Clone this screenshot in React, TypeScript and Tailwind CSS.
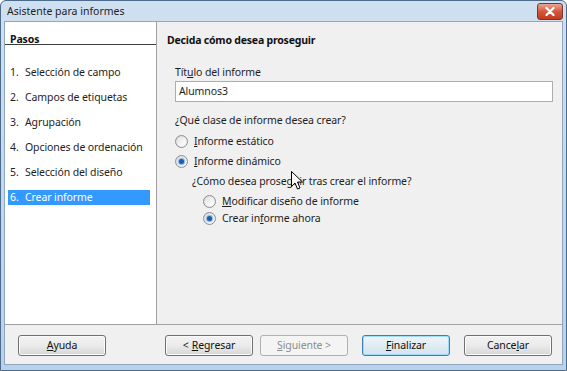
import React from "react";

const font = { fontFamily: '"Noto Sans", "Open Sans", sans-serif' };

const steps = [
  "Selección de campo",
  "Campos de etiquetas",
  "Agrupación",
  "Opciones de ordenación",
  "Selección del diseño",
  "Crear informe",
];

const Radio = ({ checked }: { checked?: boolean }) => (
  <span className="relative inline-flex h-[13px] w-[13px] shrink-0 items-center justify-center rounded-full border border-[#8e8f8f] bg-gradient-to-br from-[#d6d6d6] to-[#fafafa]">
    <span className="h-[9px] w-[9px] rounded-full bg-gradient-to-br from-[#e4e4e4] to-[#ffffff]" />
    {checked && (
      <span className="absolute h-[5px] w-[5px] rounded-full bg-[#1b5db0] shadow-[0_0_1px_1px_#7fb0e6]" />
    )}
  </span>
);

const Btn = ({
  children,
  variant,
}: {
  children: React.ReactNode;
  variant?: "default" | "disabled";
}) => {
  const base =
    "flex h-[21px] w-[88px] items-center justify-center rounded-[3px] text-[10.5px] leading-none";
  if (variant === "disabled")
    return (
      <div className={`${base} border border-[#adb2b5] bg-[#f4f4f4] text-[#8d8d8d]`}>
        {children}
      </div>
    );
  if (variant === "default")
    return (
      <div
        className={`${base} border border-[#3c7fb1] bg-gradient-to-b from-[#eef5fa] to-[#d3e3ee] text-[#111] shadow-[inset_0_0_0_1px_#9fdcf9]`}
      >
        {children}
      </div>
    );
  return (
    <div
      className={`${base} border border-[#707070] bg-gradient-to-b from-[#f2f2f2] via-[#ebebeb] to-[#d6d6d6] text-[#111] shadow-[inset_0_0_0_1px_#fbfbfb]`}
    >
      {children}
    </div>
  );
};

export default function App() {
  return (
    <div
      className="flex h-[371px] w-[567px] flex-col rounded-t-[6px] border border-[#4d6b8a] bg-gradient-to-b from-[#cfe0f1] to-[#b9d1ea]"
      style={font}
    >
      {/* title bar */}
      <div className="flex h-[20px] items-center justify-between pl-[6px] pr-[3px]">
        <span className="text-[10.5px] leading-[15px] text-[#1e1e1e]">Asistente para informes</span>
        <div className="mt-[1px] flex h-[17px] w-[26px] items-center justify-center rounded-[3px] border border-[#6e3a33] bg-gradient-to-b from-[#e8a493] via-[#d5563c] to-[#c4391f]">
          <svg width="10" height="9" viewBox="0 0 10 9">
            <path
              d="M1.5 1 L8.5 8 M8.5 1 L1.5 8"
              stroke="#fff"
              strokeWidth="2.2"
              strokeLinecap="round"
            />
          </svg>
        </div>
      </div>

      {/* body */}
      <div className="mx-[3px] mb-[5px] flex flex-1 flex-col border border-[#8ea6c0] bg-[#f0f0f0] text-[10.5px] leading-[15px] tracking-[-0.1px]">
        <div className="flex h-[303px] border-b border-[#a0a0a0]">
          {/* left steps */}
          <div className="w-[152px] border-r border-[#a0a0a0] bg-white pt-[11px]">
            <div className="h-[12px] border-b border-[#3c3c3c] pl-[5px] leading-[12px]">
              <span className="font-bold text-[#111]">Pasos</span>
            </div>
            <div className="mt-[20px] flex flex-col gap-[10px] pl-[3px] pr-[6px]">
              {steps.map((s, i) => (
                <div
                  key={s}
                  className={`flex h-[15px] items-center whitespace-nowrap pl-[2px] ${
                    i === 5 ? "bg-[#3399ff] text-white" : "text-[#1e1e1e]"
                  }`}
                >
                  <span className="w-[15px] shrink-0">{i + 1}.</span>
                  <span>{s}</span>
                </div>
              ))}
            </div>
          </div>

          {/* right content */}
          <div className="relative flex-1 pl-[10px] pr-[9px] pt-[11px] text-[#1e1e1e]">
            <div className="font-bold tracking-[-0.2px] text-[#111]">
              Decida cómo desea proseguir
            </div>
            <div className="mt-[17px] pl-[8px]">
              <div>
                Tít<span className="underline">u</span>lo del informe
              </div>
              <div className="mt-[1px] flex h-[21px] items-center border border-[#abadb3] bg-white pl-[3px]">
                Alumnos3
              </div>
              <div className="mt-[11px]">¿Qué clase de informe desea crear?</div>
              <div className="mt-[6px] flex h-[15px] items-center gap-[6px]">
                <Radio />
                <span>
                  <span className="underline">I</span>nforme estático
                </span>
              </div>
              <div className="mt-[5px] flex h-[15px] items-center gap-[6px]">
                <Radio checked />
                <span>
                  <span className="underline">I</span>nforme dinámico
                </span>
              </div>
              <div className="mt-[5px] pl-[17px]">
                ¿Cómo desea proseguir tras crear el informe?
              </div>
              <div className="mt-[5px] flex h-[15px] items-center gap-[6px] pl-[28px]">
                <Radio />
                <span>
                  <span className="underline">M</span>odificar diseño de informe
                </span>
              </div>
              <div className="mt-[2px] flex h-[15px] items-center gap-[6px] pl-[28px]">
                <Radio checked />
                <span>
                  Crear in<span className="underline">f</span>orme ahora
                </span>
              </div>
            </div>
            {/* mouse cursor */}
            <svg
              className="absolute left-[134px] top-[149px]"
              width="12"
              height="19"
              viewBox="0 0 12 19"
            >
              <path
                d="M0.5 0.5 L0.5 15.5 L4 12 L6.5 18 L9 17 L6.5 11 L11.5 11 Z"
                fill="#fff"
                stroke="#000"
                strokeWidth="1"
                strokeLinejoin="round"
              />
            </svg>
          </div>
        </div>

        {/* buttons */}
        <div className="flex flex-1 items-start pl-[13px] pt-[10px]">
          <Btn>
            <span className="underline">A</span>yuda
          </Btn>
          <div className="ml-[59px]">
            <Btn>
              &lt; <span className="ml-[3px] underline">R</span>egresar
            </Btn>
          </div>
          <div className="ml-[7px]">
            <Btn variant="disabled">
              <span className="underline">S</span>iguiente &gt;
            </Btn>
          </div>
          <div className="ml-[14px]">
            <Btn variant="default">
              <span className="underline">F</span>inalizar
            </Btn>
          </div>
          <div className="ml-[14px]">
            <Btn>
              Cance<span className="underline">l</span>ar
            </Btn>
          </div>
        </div>
      </div>
    </div>
  );
}
